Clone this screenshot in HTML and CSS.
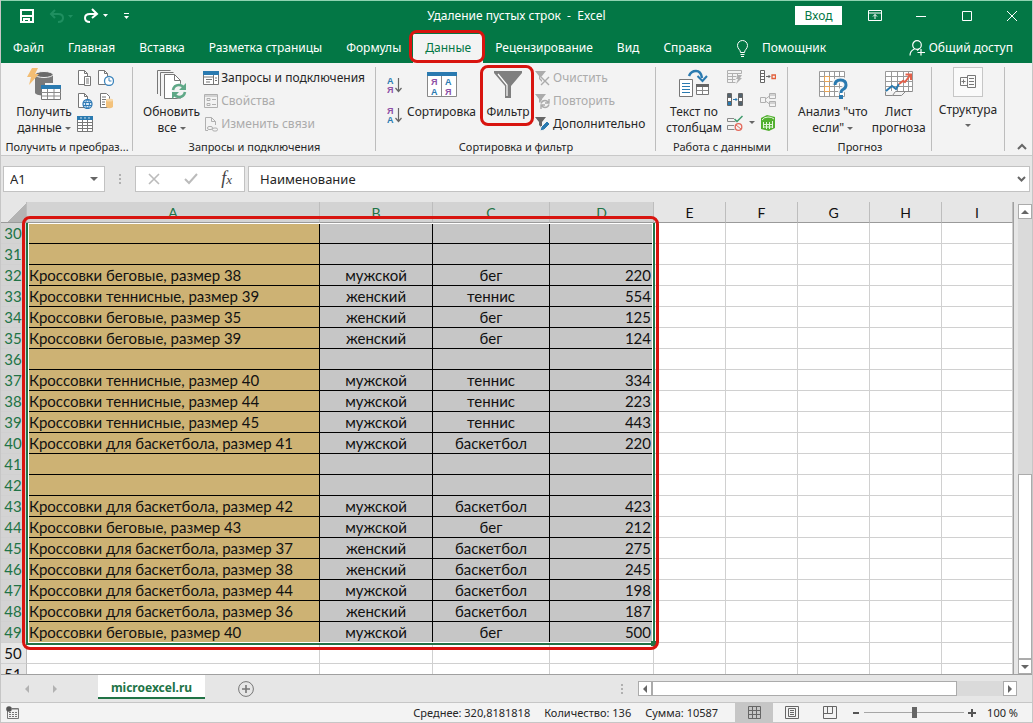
FILE: index.html
```html
<!DOCTYPE html>
<html lang="ru">
  <head>
    <meta charset="UTF-8" />
    <meta name="viewport" content="width=device-width, initial-scale=1.0" />
    <title>Удаление пустых строк - Excel</title>
    <link rel="stylesheet" href="styles.css">
  </head>
  <body>
    <div class="window">
      <header class="header">
        <div class="titlebar">
          <div class="quick">
            <button class="icon-btn" aria-label="Сохранить">
              <svg width="16" height="16" viewBox="0 0 16 16" fill="none" stroke="#fff" stroke-width="2"><path d="M2 2h12v12H2z" /><path d="M3 8h10M5 14v-3h5v3" /></svg>
            </button>
            <button class="icon-btn undo" aria-label="Отменить">
              <svg width="26" height="16" viewBox="0 0 26 16" fill="none" stroke="#1f8f60" stroke-width="2"><path d="M7 2L3 6l4 4M3 6h7q5 0 5 4t-5 4" /><path d="M20 7h5l-2.500 3z" fill="#1f8f60" stroke="none" /></svg>
            </button>
            <button class="icon-btn redo" aria-label="Вернуть">
              <svg width="26" height="16" viewBox="0 0 26 16" fill="none" stroke="#fff" stroke-width="2"><path d="M9 1l5 5-5 4M14 6H7Q2 6 2 10t5 4" /><path d="M20 6h5l-2.500 3z" fill="#fff" stroke="none" /></svg>
            </button>
            <button class="icon-btn" aria-label="Настройка панели">
              <svg width="8" height="8" viewBox="0 0 8 8"><path d="M1 1.500h5" stroke="#fff" /><path d="M1 4h5L3.500 7z" fill="#fff" /></svg>
            </button>
          </div>
          <div class="title">Удаление пустых строк&nbsp; -&nbsp; Excel</div>
          <div class="controls">
            <button class="login">Вход</button>
            <button class="win-btn" aria-label="Параметры ленты">
              <svg width="14" height="12" viewBox="0 0 14 12" fill="none" stroke="#fff"><path d="M.5.500h13v10H.5zM.5 3h13M7 9V4.500M5 6.500l2-2 2 2" /></svg>
            </button>
            <button class="win-btn" aria-label="Свернуть">
              <svg width="12" height="12" viewBox="0 0 12 12" stroke="#fff"><path d="M1 6.500h10" /></svg>
            </button>
            <button class="win-btn" aria-label="Развернуть">
              <svg width="12" height="12" viewBox="0 0 12 12" fill="none" stroke="#fff"><path d="M1.500 1.500h9v9h-9z" /></svg>
            </button>
            <button class="win-btn" aria-label="Закрыть">
              <svg width="12" height="12" viewBox="0 0 12 12" stroke="#fff"><path d="M1 1l10 10M11 1L1 11" /></svg>
            </button>
          </div>
        </div>
        <nav class="tabs">
          <a href="#">Файл</a>
          <a href="#">Главная</a>
          <a href="#">Вставка</a>
          <a href="#">Разметка страницы</a>
          <a href="#">Формулы</a>
          <a href="#" class="active marked">Данные</a>
          <a href="#">Рецензирование</a>
          <a href="#">Вид</a>
          <a href="#">Справка</a>
          <a href="#" class="helper">
            <svg width="13" height="17" viewBox="0 0 13 17" fill="none" stroke="#fff"><path d="M4.500 12.500c0-3-3-3.500-3-7a5 5 0 0 1 10 0c0 3.500-3 4-3 7zM4.500 14.500h4M5 16.500h3" /></svg>
            Помощник
          </a>
          <a href="#" class="share">
            <svg width="16" height="16" viewBox="0 0 16 16" fill="none" stroke="#fff" stroke-width="1.200"><circle cx="8" cy="5" r="4.300" /><path d="M1 15.500c0-3.500 2-5.500 4.500-6.500M8 10.500l2-1.500M12 9v6.500M8.500 12.500H16" /></svg>
            Общий доступ
          </a>
        </nav>
      </header>

      <!-- Лента -->
      <div class="ribbon">
        <section class="group g-get">
          <div class="group-body">
            <button class="big">
              <svg width="34" height="34" viewBox="0 0 34 34"><path d="M8 7.500v18c0 2 4 3 8 3h2V16h8V7.500z" fill="#7a7a7a" /><ellipse cx="17" cy="7.500" rx="9" ry="3" fill="#6a6a6a" stroke="#f3f3f3" /><path d="M5 1h6L8 7h4L2 18l2-8H0z" fill="#f2bd73" /><path d="M14.500 18.500h19v14h-19z" fill="#fff" stroke="#777" /><path d="M14 18h20v4H14z" fill="#2a7ab0" /><path d="M14 25.500h20M14 29h20M20.500 22v10M27 22v10" stroke="#8a8a8a" fill="none" /></svg>
              <span>Получить<br>данные <i class="arrow"></i></span>
            </button>
            <div class="mini-grid">
              <button class="mini" aria-label="Из текстового файла"><svg width="16" height="16" viewBox="0 0 16 16" fill="#fff" stroke="#777"><path d="M1.500.500h6l3 3v11h-9z" /><path d="M7.500.500v3h3" fill="none" /><path d="M7.500 6.500h6v9h-6z" /><path d="M9 9h3M9 11h3M9 13h3" /></svg></button>
              <button class="mini" aria-label="Последние источники"><svg width="16" height="16" viewBox="0 0 16 16" fill="#fff" stroke="#777"><path d="M.5.500h6l3 3v11h-9z" /><path d="M6.500.500v3h3" fill="none" /><circle cx="11" cy="11" r="4.500" stroke="#3e86bd" stroke-width="1.300" /><path d="M11 8v3h2.500" fill="none" stroke="#3e86bd" /></svg></button>
              <button class="mini" aria-label="Из Интернета"><svg width="16" height="16" viewBox="0 0 16 16" fill="#fff" stroke="#777"><path d="M1.500.500h6l3 3v11h-9z" /><path d="M7.500.500v3h3" fill="none" /><circle cx="10.500" cy="11" r="4.500" fill="#dcecf8" stroke="#2f7ab5" stroke-width="1.300" /><path d="M6 9.500h9M6 12.500h9M10.500 6.500q-4 4.500 0 9q4-4.500 0-9" fill="none" stroke="#2f7ab5" /></svg></button>
              <button class="mini" aria-label="Существующие подключения"><svg width="16" height="16" viewBox="0 0 16 16" fill="#fff" stroke="#777"><path d="M2.500.500h6l3 3v11h-9z" /><path d="M4 4h4M4 6.500h4M4 9h3M4 11.500h3" /><path d="M8 7v7q3.500 2.500 7 0V7z" fill="#f3c27c" stroke="none" /><ellipse cx="11.500" cy="7" rx="3.500" ry="1.500" fill="#f8d8a8" stroke="none" /></svg></button>
              <button class="mini" aria-label="Из таблицы"><svg width="16" height="16" viewBox="0 0 16 16" fill="none" stroke="#777"><path d="M.5.500h15v15H.5z" fill="#fff" /><path d="M0 6.500h16M0 9.500h16M0 12.500h16M5.500 4v12M10.500 4v12" /><path d="M0 0h16v4H0z" fill="#2a7ab0" stroke="none" /><path d="M3 1.500h2L4 3zM7 1.500h2L8 3zM11 1.500h2L12 3z" fill="#fff" stroke="none" /></svg></button>
            </div>
          </div>
          <h2>Получить и преобраз...</h2>
        </section>

        <section class="group g-query">
          <div class="group-body">
            <button class="big">
              <svg width="32" height="34" viewBox="0 0 32 34" fill="#fff" stroke="#777"><path d="M1.500 27V3.500h13M4.500 29V5.500h13" fill="none" /><path d="M8.500 7.500h10l6 6v18h-16z" /><path d="M18.500 7.500v6h6" fill="none" /><circle cx="23" cy="24" r="7.500" stroke="none" fill="#f3f3f3" /><path d="M17 23q1-5 6-5 3 0 5 3M29 25q-1 5-6 5-3 0-5-3" fill="none" stroke="#5fa887" stroke-width="2.600" /><path d="M30 16v7h-7zM16 32v-7h7z" fill="#5fa887" stroke="none" /></svg>
              <span>Обновить<br>все <i class="arrow"></i></span>
            </button>
            <div class="list">
              <button class="row"><svg width="16" height="16" viewBox="0 0 16 16" fill="none" stroke="#777"><path d="M.5 2.500h15v12H.5z" fill="#fff" /><path d="M10.500 5v9M1 7h9M3 9.500h6M3 12h4M12 8h2M12 10.500h2" /><path d="M0 1h16v4H0z" fill="#2a7ab0" stroke="none" /></svg>Запросы и подключения</button>
              <button class="row" disabled><svg width="16" height="16" viewBox="0 0 16 16" fill="none" stroke="#b0b0b0"><path d="M1.500 1.500h13v13h-13zM4 5.500h3v2H4zM4 10.500h3v2H4zM9 6.500h4M9 11.500h4M1 3h14" /></svg>Свойства</button>
              <button class="row" disabled><svg width="16" height="16" viewBox="0 0 16 16" fill="none" stroke="#b0b0b0"><path d="M5 14.500H2.500V1.500h6l4 4V9M8.500 1.500v4h4" /><rect x="4.500" y="10.500" width="5" height="3" rx="1.500" /><rect x="9.500" y="12" width="5" height="3" rx="1.500" /></svg>Изменить связи</button>
            </div>
          </div>
          <h2>Запросы и подключения</h2>
        </section>

        <section class="group g-sort">
          <div class="group-body">
            <div class="sort-col">
              <button class="mini" aria-label="Сортировка от А до Я"><svg width="15" height="20" viewBox="0 0 15 20"><text x="0" y="9" fill="#2a7ab0">А</text><text x="0" y="18" fill="#8d4fa5">Я</text><path d="M11.500 3v13M8.500 13l3 3.500 3-3.500" fill="none" stroke="#666" stroke-width="1.200" /></svg></button>
              <button class="mini" aria-label="Сортировка от Я до А"><svg width="15" height="20" viewBox="0 0 15 20"><text x="0" y="9" fill="#8d4fa5">Я</text><text x="0" y="18" fill="#2a7ab0">А</text><path d="M11.500 3v13M8.500 13l3 3.500 3-3.500" fill="none" stroke="#666" stroke-width="1.200" /></svg></button>
            </div>
            <button class="big">
              <svg width="30" height="34" viewBox="0 0 30 34"><path d="M.5 5.500h29v24H.5z" fill="#fff" stroke="#888" /><path d="M0 5h30v4H0z" fill="#2a7ab0" /><path d="M14.500 9v21" stroke="#888" /><g class="letters"><text x="4" y="18" fill="#8d4fa5">Я</text><text x="4" y="28" fill="#2a7ab0">А</text><text x="18" y="18" fill="#2a7ab0">А</text><text x="18" y="28" fill="#8d4fa5">Я</text></g></svg>
              <span>Сортировка</span>
            </button>
            <button class="big marked filter">
              <svg width="28" height="34" viewBox="0 0 28 34"><path d="M0 4h28v2L17 19v12h-6V19L0 6z" fill="#7f7f7f" /><path d="M4 7l9 11v11" fill="none" stroke="#fff" stroke-width="1.200" /></svg>
              <span>Фильтр</span>
            </button>
            <div class="list">
              <button class="row" disabled><svg width="16" height="16" viewBox="0 0 16 16"><path d="M0 1h11L7 6v6L4 9V6z" fill="#ababab" /><path d="M6 7l8 8M14 7l-8 8" stroke="#f3f3f3" stroke-width="3" /><path d="M6 7l8 8M14 7l-8 8" stroke="#ababab" stroke-width="1.400" /></svg>Очистить</button>
              <button class="row" disabled><svg width="16" height="16" viewBox="0 0 16 16" fill="none"><path d="M0 1h11L7 6v6L4 9V6z" fill="#ababab" /><circle cx="10" cy="11" r="5" fill="#f3f3f3" /><path d="M6 10.500q1-3 4-3 2 0 3.500 2M14 11.500q-1 3-4 3-2 0-3.500-2M14 6v4h-4M6 16v-4h4" stroke="#ababab" stroke-width="1.400" /></svg>Повторить</button>
              <button class="row"><svg width="16" height="16" viewBox="0 0 16 16"><path d="M0 1h11L7 6v6L4 9V6z" fill="#666" /><path d="M5 15l1-4 6-6 3 3-6 6z" fill="#2a7ab0" stroke="#f3f3f3" /></svg>Дополнительно</button>
            </div>
          </div>
          <h2>Сортировка и фильтр</h2>
        </section>

        <section class="group g-data">
          <div class="group-body">
            <button class="big">
              <svg width="32" height="34" viewBox="0 0 32 34" fill="none"><path d="M1.500 12.500h13v17h-13z" fill="#fff" stroke="#777" /><path d="M4 16.500h8M4 19.500h8M4 22.500h8M4 25.500h8" stroke="#2a7ab0" /><path d="M18.500 17.500h12v10h-12z" fill="#fff" stroke="#777" /><path d="M18 17h13v3H18z" fill="#666" /><path d="M24.500 20v7M19 23.500h11" stroke="#888" /><path d="M11 9q2-5 7-5 5 0 6 7" stroke="#2a7ab0" stroke-width="2.500" /><path d="M19.500 9l5 5 4.500-5" stroke="#2a7ab0" stroke-width="2" /></svg>
              <span>Текст по<br>столбцам</span>
            </button>
            <div class="tools">
              <button class="mini" aria-label="Мгновенное заполнение"><svg width="16" height="16" viewBox="0 0 16 16" fill="none" stroke="#b0b0b0"><path d="M.5 1.500h14v3H.5zM.5 4.500v9h8M.5 7.500h9M.5 10.500h8M5.500 4.500v9M10.500 4.500v3" /><path d="M11 6h4l-2 3h2l-6 6 2-5H9z" fill="#b0b0b0" stroke="none" /></svg></button>
              <button class="mini" aria-label="Консолидация"><svg width="16" height="16" viewBox="0 0 16 16" fill="none" stroke="#666"><path d="M.5 1.500h4v12h-4zM.5 5.500h4M.5 9.500h4" fill="#fff" /><path d="M1 2h3v3H1z" stroke="none" fill="#53636e" /><path d="M1 10h3v3H1z" stroke="none" fill="#2a7ab0" /><path d="M6 7.500h4M8.500 6L10 7.500 8.500 9" stroke="#2a7ab0" /><path d="M11.500 1.500h4v12h-4zM11.500 5.500h4M11.500 9.500h4" fill="#fff" /><path d="M12 2h3v3h-3zM12 10h3v3h-3z" stroke="none" fill="#53636e" /></svg></button>
              <button class="mini" aria-label="Проверка данных"><svg width="16" height="16" viewBox="0 0 16 16" fill="none" stroke="#888"><path d="M7 3.500H.5v3h8M7 10.500H.5v4h7" /><path d="M7.500 4l2.500 2.500L15.500 1" stroke="#3f9b6c" stroke-width="1.500" /><circle cx="11.500" cy="12" r="3.300" stroke="#e2695b" stroke-width="1.300" /><path d="M9 10l5 4" stroke="#e2695b" /></svg></button>
            </div>
            <i class="arrow tools-arrow"></i>
            <div class="tools">
              <button class="mini" aria-label="Удалить дубликаты"><svg width="16" height="16" viewBox="0 0 16 16" fill="none" stroke="#666"><path d="M.5 1.500h4v12h-4zM.5 4.500h4M.5 7.500h4M.5 10.500h4" fill="#fff" /><path d="M6 7.500h4M8.500 6L10 7.500 8.500 9" /><path d="M12 6h3.500v3.500H12z" stroke="#e2603c" stroke-width="1.300" /></svg></button>
              <button class="mini" aria-label="Отношения"><svg width="16" height="16" viewBox="0 0 16 16" fill="none" stroke="#b0b0b0"><path d="M.5 5.500h5v5h-5zM9.500 1.500h6v5h-6zM9.500 9.500h6v5h-6zM5.500 7l4-3M5.500 9l4 3M10 3h5M10 11h5" /></svg></button>
              <button class="mini" aria-label="Модель данных"><svg width="16" height="16" viewBox="0 0 16 16"><path d="M1 3l6-3 8 2v11l-6 3-8-2z" fill="#52b030" /><path d="M2 5q2-3 6-3 4 0 6 2M3.500 7v6M6.500 7v7M9.500 7v7M12.500 6v7M3 9.500h10M3 12h10" fill="none" stroke="#e4f6dc" /></svg></button>
            </div>
          </div>
          <h2>Работа с данными</h2>
        </section>

        <section class="group g-forecast">
          <div class="group-body">
            <button class="big">
              <svg width="30" height="34" viewBox="0 0 30 34" fill="none"><path d="M1.500 4.500h25v25h-25z" fill="#fff" /><path d="M1.500 4.500h25v25h-25zM1 9.500h26M1 14.500h26M1 19.500h26M1 24.500h26M6.500 4v26M11.500 4v26M16.500 4v26M21.500 4v26" stroke="#999" /><path d="M6.500 9.500h5v5h-5zM6.500 19.500h5v5h-5z" stroke="#e9a556" /><path d="M17 18q0-5 5.500-5t5.500 5q0 3-3 4.500-2 1-2 3.500" stroke="#f3f3f3" stroke-width="6" /><path d="M17 18q0-5 5.500-5t5.500 5q0 3-3 4.500-2 1-2 3.500" stroke="#2a7ab0" stroke-width="3" /><path d="M21 28h4v4h-4z" fill="#2a7ab0" /></svg>
              <span>Анализ "что<br>если" <i class="arrow"></i></span>
            </button>
            <button class="big">
              <svg width="30" height="34" viewBox="0 0 30 34" fill="none"><path d="M1.500 4.500h27v20h-27z" fill="#fff" /><path d="M28.500 24.500v-20h-27v20M1 9.500h28M1 14.500h28M1 19.500h28M7.500 4v20M13.500 4v20M19.500 4v20M24.500 4v20" stroke="#999" /><path d="M1.500 24.500v4h7l3-4h17M8.500 28.500h9l4-4" fill="#f3f3f3" stroke="#888" /><path d="M2 24l6-5 4 3 3-5" stroke="#2a7ab0" stroke-width="2" /><path d="M15 17l4-3 2 1 6-8M21.500 7.500H27V13" stroke="#e2604a" stroke-width="2" /></svg>
              <span>Лист<br>прогноза</span>
            </button>
          </div>
          <h2>Прогноз</h2>
        </section>

        <section class="group g-outline">
          <button class="outline">
            <span class="outline-box"><svg width="16" height="14" viewBox="0 0 16 14" fill="none" stroke="#777"><path d="M7 2.500H.5v8H7M3.500 4.500v4M1.500 6.500h4M7.500.500h8v12h-8zM9 3.500h5M9 6.500h5M9 9.500h5" /></svg></span>
            Структура
            <i class="arrow"></i>
          </button>
        </section>
        <button class="collapse" aria-label="Свернуть ленту"><svg width="10" height="7" viewBox="0 0 10 7" fill="none" stroke="#666" stroke-width="2"><path d="M1 6l4-4 4 4" /></svg></button>
      </div>

      <!-- Строка формул -->
      <div class="formula-bar">
        <div class="name-box">
          <input type="text" value="A1" aria-label="Имя">
          <i class="arrow"></i>
        </div>
        <i class="dots"></i>
        <div class="fx-box">
          <button aria-label="Отмена"><svg width="12" height="12" viewBox="0 0 12 12" stroke="#bbb" stroke-width="1.600"><path d="M1 1l10 10M11 1L1 11" /></svg></button>
          <button aria-label="Ввод"><svg width="14" height="12" viewBox="0 0 14 12" fill="none" stroke="#bbb" stroke-width="2"><path d="M1 6l4 4 8-9" /></svg></button>
          <button class="fx" aria-label="Вставить функцию">f<small>x</small></button>
        </div>
        <div class="formula-box">
          <input type="text" value="Наименование" aria-label="Строка формул">
          <svg width="9" height="7" viewBox="0 0 9 7" fill="none" stroke="#666" stroke-width="2"><path d="M1 1l3.500 3.500L8 1" /></svg>
        </div>
      </div>

      <!-- Лист -->
      <main class="workspace">
        <div class="sheet">
          <table>
            <colgroup>
              <col class="c-num"><col class="c-a"><col class="c-b"><col class="c-c"><col class="c-d">
              <col class="c-std"><col class="c-std"><col class="c-std"><col class="c-std"><col>
            </colgroup>
            <thead>
              <tr>
                <th class="corner"></th>
                <th class="sel">A</th><th class="sel">B</th><th class="sel">C</th><th class="sel">D</th>
                <th>E</th><th>F</th><th>G</th><th>H</th><th>I</th>
              </tr>
            </thead>
            <tbody id="rows"></tbody>
          </table>
          <div class="selection"></div>
          <div class="highlight"></div>
        </div>
        <div class="vscroll">
          <button aria-label="Вверх"><i class="tri up"></i></button>
          <div class="vtrack"><div class="vthumb"></div></div>
          <button aria-label="Вниз"><i class="tri down"></i></button>
        </div>
      </main>

      <div class="sheet-tabs">
        <div class="sheet-nav"><i class="tri left"></i><i class="tri right"></i></div>
        <a href="#" class="sheet-tab">microexcel.ru</a>
        <button class="add" aria-label="Новый лист"><svg width="16" height="16" viewBox="0 0 16 16" fill="none" stroke="#777"><circle cx="8" cy="8" r="7.400" /><path d="M8 4v8M4 8h8" stroke-width="1.600" /></svg></button>
        <i class="dots"></i>
        <div class="hscroll">
          <button aria-label="Влево"><i class="tri left"></i></button>
          <div class="htrack"><div class="hthumb"></div></div>
          <button aria-label="Вправо"><i class="tri right"></i></button>
        </div>
      </div>

      <footer class="status">
        <button class="macro" aria-label="Запись макроса"><svg width="13" height="13" viewBox="0 0 13 13" fill="none" stroke="#777"><path d="M1.500 5v7.500h11v-10H6" /><path d="M6 3h6M3 6.500h2M6 6.500h2M9 6.500h2M3 8.500h2M6 8.500h2M9 8.500h2M3 10.500h2M6 10.500h2M9 10.500h2" /><circle cx="3" cy="3" r="2.800" fill="#555" stroke="none" /></svg></button>
        <div class="stats">
          <span>Среднее: 320,8181818</span>
          <span>Количество: 136</span>
          <span>Сумма: 10587</span>
        </div>
        <div class="views">
          <button class="on" aria-label="Обычный"><svg width="13" height="13" viewBox="0 0 13 13" fill="none" stroke="#666"><path d="M.5.500h12v12H.5zM0 4.500h13M0 8.500h13M4.500 0v13M8.500 0v13" /></svg></button>
          <button aria-label="Разметка страницы"><svg width="14" height="13" viewBox="0 0 14 13" fill="none" stroke="#666"><path d="M.5.500h13v12H.5zM3.500 2.500h7v8h-7zM5 4.500h4M5 6.500h4M5 8.500h4" /></svg></button>
          <button aria-label="Страничный режим"><svg width="14" height="13" viewBox="0 0 14 13" fill="none" stroke="#666"><path d="M.5.500h13v12H.5zM.5 7.500h9v-7M4.500.500v7" /></svg></button>
        </div>
        <div class="zoom">
          <button aria-label="Уменьшить"><svg width="8" height="8" viewBox="0 0 8 8" stroke="#555" stroke-width="2"><path d="M1 4h6" /></svg></button>
          <input type="range" min="0" max="200" value="100" aria-label="Масштаб">
          <button aria-label="Увеличить"><svg width="8" height="8" viewBox="0 0 8 8" stroke="#555" stroke-width="2"><path d="M0 4h8M4 0v8" /></svg></button>
          <span>100 %</span>
        </div>
      </footer>
    </div>

    <script>
      // строки листа: [номер, наименование, пол, вид спорта, количество]
      const data = [
        [30], [31],
        [32, "Кроссовки беговые, размер 38", "мужской", "бег", 220],
        [33, "Кроссовки теннисные, размер 39", "женский", "теннис", 554],
        [34, "Кроссовки беговые, размер 35", "женский", "бег", 125],
        [35, "Кроссовки беговые, размер 39", "женский", "бег", 124],
        [36],
        [37, "Кроссовки теннисные, размер 40", "мужской", "теннис", 334],
        [38, "Кроссовки теннисные, размер 44", "мужской", "теннис", 223],
        [39, "Кроссовки теннисные, размер 45", "мужской", "теннис", 443],
        [40, "Кроссовки для баскетбола, размер 41", "мужской", "баскетбол", 220],
        [41], [42],
        [43, "Кроссовки для баскетбола, размер 42", "мужской", "баскетбол", 423],
        [44, "Кроссовки беговые, размер 43", "мужской", "бег", 212],
        [45, "Кроссовки для баскетбола, размер 37", "женский", "баскетбол", 275],
        [46, "Кроссовки для баскетбола, размер 38", "женский", "баскетбол", 245],
        [47, "Кроссовки для баскетбола, размер 44", "мужской", "баскетбол", 198],
        [48, "Кроссовки для баскетбола, размер 36", "женский", "баскетбол", 187],
        [49, "Кроссовки беговые, размер 40", "мужской", "бег", 500],
        [50], [51],
      ];

      const body = document.getElementById("rows");
      data.forEach((row) => {
        const tr = document.createElement("tr");
        if (row[0] < 50) tr.className = "filled";
        const th = document.createElement("th");
        th.textContent = row[0];
        tr.appendChild(th);
        for (let i = 1; i < 10; i++) {
          const td = document.createElement("td");
          td.textContent = row[i] === undefined ? "" : row[i];
          tr.appendChild(td);
        }
        body.appendChild(tr);
      });
    </script>
  </body>
</html>
```
FILE: styles.css
```css
* {
  box-sizing: border-box;
}
body {
  margin: 0;
  font-family: "Noto Sans", "Open Sans", sans-serif;
  font-size: 12px;
  line-height: 16px;
  color: #262626;
}
button {
  padding: 0;
  border: none;
  background: none;
  font: inherit;
  color: inherit;
}
a {
  color: inherit;
  text-decoration: none;
}
input {
  min-width: 0;
  border: none;
  outline: none;
  padding: 0;
  background: none;
  font: inherit;
  color: inherit;
}
svg {
  display: block;
  flex: none;
}
.window {
  display: flex;
  flex-direction: column;
  height: 100vh;
  border: 1px solid #c6c6c6;
  border-top: none;
  background-color: #e6e6e6;
  overflow: hidden;
}

/* маленькие стрелки */
.arrow {
  display: inline-block;
  border: 3px solid transparent;
  border-top-color: #666;
  border-bottom: none;
  vertical-align: middle;
}
.tri {
  border: 4px solid transparent;
}
.tri.up {
  border-top: none;
  border-bottom-color: #666;
}
.tri.down {
  border-bottom: none;
  border-top-color: #666;
}
.tri.left {
  border-left: none;
  border-right-color: #666;
}
.tri.right {
  border-right: none;
  border-left-color: #666;
}
.dots {
  width: 2px;
  height: 10px;
  background: repeating-linear-gradient(#b0b0b0 0 2px, transparent 2px 4px);
}
.marked {
  position: relative;
}
.marked::after,
.highlight {
  content: "";
  position: absolute;
  z-index: 2;
  border: 3px solid #d8140f;
  border-radius: 8px;
  pointer-events: none;
}

/* шапка */
.header {
  flex: none;
  margin: 0 -1px;
  border-top: 1px solid #8fd3b1;
  background-color: #037745;
  color: #fff;
}
.titlebar {
  display: grid;
  grid-template-columns: 1fr auto 1fr;
  align-items: center;
  height: 29px;
}
.quick {
  display: flex;
  align-items: center;
  padding-left: 19px;
}
.undo {
  margin-left: 13px;
}
.redo {
  margin: 0 14px 0 9px;
}
.controls {
  display: flex;
  justify-content: flex-end;
  align-items: center;
}
.login {
  width: 47px;
  height: 19px;
  margin-right: 10px;
  background-color: #fff;
  color: #037745;
}
.win-btn {
  display: flex;
  justify-content: center;
  width: 46px;
}
.win-btn:last-child {
  width: 43px;
}
.tabs {
  display: flex;
  height: 33px;
  align-items: flex-end;
  padding-left: 1px;
}
.tabs a {
  padding: 6px 12px 0;
  height: 29px;
  white-space: nowrap;
}
.tabs .active {
  background-color: #f3f3f3;
  color: #037745;
}
.tabs .marked::after {
  inset: -4px -2px 0 -4px;
}
.tabs .helper {
  display: flex;
  gap: 13px;
}
.tabs .share {
  display: flex;
  gap: 4px;
  margin-left: auto;
  padding-right: 20px;
}

/* лента */
.ribbon {
  display: flex;
  flex: none;
  height: 93px;
  border-bottom: 1px solid #c8c8c8;
  background-color: #f3f3f3;
}
.group {
  position: relative;
  flex: none;
  white-space: nowrap;
}
.group::after {
  content: "";
  position: absolute;
  top: 4px;
  right: 0;
  bottom: 4px;
  width: 1px;
  background-color: #bdbdbd;
}
.group h2 {
  margin: 0;
  font-size: 11px;
  font-weight: normal;
  text-align: center;
}
.group-body {
  display: flex;
  height: 76px;
}
.g-get {
  width: 132px;
}
.g-query {
  width: 243px;
}
.g-sort {
  width: 280px;
}
.g-data {
  width: 132px;
}
.g-forecast {
  width: 144px;
}
.g-outline {
  width: 73px;
}
.big {
  display: flex;
  flex-direction: column;
  align-items: center;
  gap: 3px;
  height: 73px;
  padding-top: 4px;
}
.g-get .group-body,
.g-query .group-body,
.g-data .group-body,
.g-forecast .group-body {
  padding-left: 10px;
}
.g-get .big {
  width: 66px;
}
.mini-grid {
  display: grid;
  grid-template-columns: 21px 16px;
  grid-auto-rows: 23px;
  padding-top: 3px;
}
.mini {
  display: flex;
  align-items: center;
}
.list {
  padding-top: 3px;
}
.g-query .list {
  padding-left: 3px;
}
.row {
  display: flex;
  align-items: center;
  gap: 2px;
  height: 23px;
}
.row:disabled {
  color: #ababab;
}
.g-sort .group-body {
  padding-left: 11px;
}
.sort-col {
  display: grid;
  grid-template-rows: 30px 30px;
  width: 20px;
  padding-top: 7px;
}
.sort-col text,
.letters text {
  font-family: "Liberation Sans", sans-serif;
  font-size: 9px;
  font-weight: bold;
}
.filter {
  width: 48px;
  margin-left: 8px;
  margin-right: 3px;
}
.filter::after {
  inset: 2px -2px 10px -4px;
}
.tools {
  display: grid;
  grid-auto-rows: 23px;
  padding: 2px 0 0 5px;
}
.tools-arrow {
  margin: 58px 0 0 6px;
  height: 3px;
}
.g-forecast .big + .big {
  margin-left: 4px;
}
.outline {
  display: flex;
  flex-direction: column;
  align-items: center;
  width: 72px;
  padding-top: 4px;
}
.outline-box {
  display: flex;
  justify-content: center;
  align-items: center;
  width: 30px;
  height: 30px;
  margin-bottom: 5px;
  border: 1px solid #c6c6c6;
  background-color: #fafafa;
}
.outline .arrow {
  margin-top: 6px;
}
.collapse {
  margin: auto 5px 5px auto;
}

/* строка формул */
.formula-bar {
  display: flex;
  flex: none;
  align-items: center;
  height: 46px;
  padding: 0 2px;
  font-size: 13px;
}
.name-box,
.fx-box,
.formula-box {
  display: flex;
  align-items: center;
  height: 26px;
  border: 1px solid #c2c2c2;
  background-color: #fff;
}
.name-box {
  width: 102px;
  padding: 0 6px;
}
.name-box input {
  flex: 1;
}
.name-box .arrow {
  border-width: 4px 4px 0;
}
.formula-bar .dots {
  margin: 0 14px;
}
.fx-box {
  justify-content: space-around;
  width: 110px;
}
.fx {
  font-family: "Liberation Serif", serif;
  font-size: 18px;
  font-style: italic;
  color: #444;
}
.fx small {
  font-size: 13px;
}
.formula-box {
  flex: 1;
  margin-left: 3px;
  padding: 0 3px 0 11px;
}
.formula-box input {
  flex: 1;
}

/* лист */
.workspace {
  display: flex;
  flex: 1;
  min-height: 0;
  margin-left: -1px;
  border-bottom: 1px solid #a0a0a0;
}
.sheet {
  position: relative;
  flex: 1;
  overflow: hidden;
  border-right: 1px solid #a0a0a0;
}
table {
  width: 100%;
  table-layout: fixed;
  border-collapse: separate;
  border-spacing: 0;
  background-color: #fff;
}
th,
td {
  height: 21px;
  padding: 1px 2px 0;
  border-right: 1px solid #d0d0d0;
  border-bottom: 1px solid #d0d0d0;
  font-family: Lato, "Noto Sans", sans-serif;
  font-size: 15px;
  font-weight: normal;
  line-height: 19px;
  color: #111;
  white-space: nowrap;
  overflow: hidden;
}
.c-num {
  width: 27px;
}
.c-a {
  width: 293px;
}
.c-b {
  width: 113px;
}
.c-c {
  width: 117px;
}
.c-d {
  width: 104px;
}
.c-std {
  width: 72px;
}
th {
  background-color: #e6e6e6;
  border-right-color: #bdbdbd;
}
thead th {
  padding-top: 2px;
  border-bottom-color: #9a9a9a;
  font-size: 14px;
  line-height: 18px;
}
thead .sel,
.filled th {
  background-color: #d3d3d3;
  color: #217346;
}
.corner {
  background: linear-gradient(135deg, #e6e6e6 0 60%, #b4b4b4 60%);
}
.filled td:nth-child(-n + 5) {
  border-color: #000;
  background-color: #c6c6c6;
  text-align: center;
}
.filled td:nth-child(2) {
  background-color: #cdb274;
  text-align: left;
}
.filled td:nth-child(5) {
  text-align: right;
}
.selection {
  position: absolute;
  top: 21px;
  left: 26px;
  width: 629px;
  height: 422px;
  border: 2px solid #217346;
  border-top: none;
  box-shadow: inset 0 0 0 1px #fff;
}
.selection::after {
  content: "";
  position: absolute;
  right: -3px;
  bottom: -3px;
  width: 5px;
  height: 5px;
  background-color: #217346;
}
.highlight {
  top: 14px;
  left: 22px;
  width: 637px;
  height: 434px;
}
.vscroll {
  display: flex;
  flex-direction: column;
  width: 18px;
  padding: 2px 0 0 4px;
}
.vscroll button,
.hscroll button {
  display: flex;
  justify-content: center;
  align-items: center;
  flex: none;
  width: 14px;
  height: 15px;
  border: 1px solid #ababab;
  background-color: #fff;
}
.vtrack {
  display: flex;
  flex: 1;
  flex-direction: column;
  justify-content: flex-end;
  background-color: #dadada;
}
.vthumb {
  height: 42%;
  border: 1px solid #ababab;
  background-color: #fff;
}

/* ярлыки листов */
.sheet-tabs {
  display: flex;
  flex: none;
  align-items: center;
  height: 27px;
}
.sheet-nav {
  display: flex;
  gap: 24px;
  width: 97px;
  padding-left: 24px;
  opacity: 0.4;
}
.sheet-tab {
  align-self: flex-start;
  width: 107px;
  height: 24px;
  padding-top: 5px;
  border-bottom: 2px solid #217346;
  background-color: #fff;
  color: #217346;
  font-size: 12px;
  font-weight: bold;
  text-align: center;
}
.add {
  margin-left: 33px;
}
.sheet-tabs .dots {
  margin-left: auto;
}
.hscroll {
  display: flex;
  width: 379px;
  margin: 0 15px;
}
.htrack {
  flex: 1;
  background-color: #dadada;
}
.hthumb {
  width: 87%;
  height: 15px;
  border: 1px solid #ababab;
  background-color: #fff;
}

/* строка состояния */
.status {
  display: flex;
  flex: none;
  align-items: center;
  height: 20px;
  border-top: 1px solid #c6c6c6;
  background-color: #f3f3f3;
  font-size: 11px;
}
.macro {
  margin-left: 5px;
}
.stats {
  display: flex;
  gap: 14px;
  margin-left: auto;
  white-space: nowrap;
}
.views {
  display: flex;
  align-self: stretch;
  margin-left: 17px;
}
.views button {
  display: flex;
  justify-content: center;
  align-items: center;
  width: 38px;
}
.views .on {
  background-color: #c6c6c6;
}
.zoom {
  display: flex;
  align-items: center;
  padding: 0 14px 0 3px;
}
.zoom span {
  margin-left: 11px;
}
.zoom input {
  width: 100px;
  height: 12px;
  margin: 0 4px;
  appearance: none;
  background: linear-gradient(#a6a6a6, #a6a6a6) center / 100% 1px no-repeat;
}
.zoom input::-webkit-slider-thumb {
  appearance: none;
  width: 5px;
  height: 11px;
  background-color: #666;
}
```
